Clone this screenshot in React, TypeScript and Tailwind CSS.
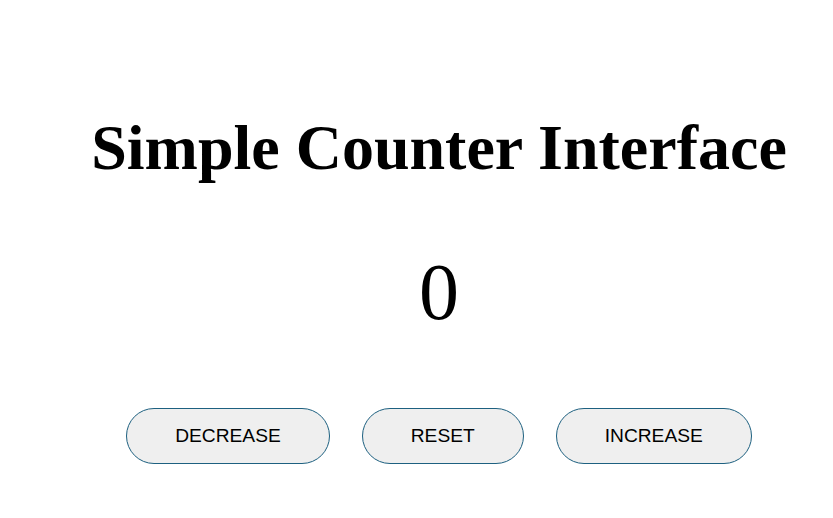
export default function App() {
  return (
    <div className="min-h-[518px] w-full bg-white pl-[45px] flex flex-col items-center">
      <h1 className="mt-[116px] text-[64px] font-bold leading-none text-black font-['Liberation_Serif','Times_New_Roman',serif]">
        Simple Counter Interface
      </h1>
      <div className="mt-[72px] text-[80px] leading-none text-black font-['Liberation_Serif','Times_New_Roman',serif]">
        0
      </div>
      <div className="mt-[76px] flex gap-8 font-['Liberation_Sans',Arial,sans-serif]">
        <button className="rounded-full border border-[#1d6080] bg-[#efefef] px-12 py-4 text-[19.2px] leading-[22px] text-black">DECREASE</button>
        <button className="rounded-full border border-[#1d6080] bg-[#efefef] px-12 py-4 text-[19.2px] leading-[22px] text-black">RESET</button>
        <button className="rounded-full border border-[#1d6080] bg-[#efefef] px-12 py-4 text-[19.2px] leading-[22px] text-black">INCREASE</button>
      </div>
    </div>
  );
}
